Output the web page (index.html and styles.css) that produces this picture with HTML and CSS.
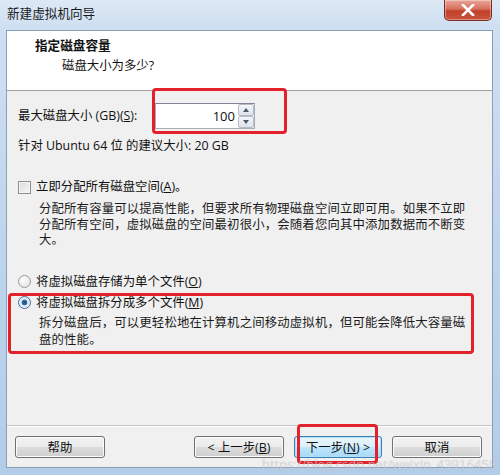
FILE: index.html
```html
<!DOCTYPE html>
<html lang="zh-CN">
<head>
    <meta charset="UTF-8">
    <title>新建虚拟机向导</title>
    <link rel="stylesheet" href="styles.css">
</head>
<body>
    <div class="window">
        <div class="titlebar">
            <span class="title">新建虚拟机向导</span>
            <span class="close">
                <svg width="14" height="12" viewBox="0 0 14 12">
                    <path d="M2 1 L12 11 M12 1 L2 11" stroke="#fff" stroke-width="2.6" stroke-linecap="square"/>
                </svg>
            </span>
        </div>

        <div class="client">
            <div class="header">
                <h1>指定磁盘容量</h1>
                <p>磁盘大小为多少?</p>
            </div>

            <div class="content">
                <div class="size-row">
                    <label for="size">最大磁盘大小 (GB)(<u>S</u>):</label>
                    <div class="spin">
                        <span class="spin-value" id="size">100</span>
                        <div class="spin-btns">
                            <span class="spin-btn up"></span>
                            <span class="spin-btn down"></span>
                        </div>
                    </div>
                </div>
                <p class="hint">针对 Ubuntu 64 位 的建议大小: 20 GB</p>

                <div class="option check-row"><span class="checkbox"></span>立即分配所有磁盘空间(<u>A</u>)。</div>
                <p class="desc">分配所有容量可以提高性能，但要求所有物理磁盘空间立即可用。如果不立即<br>分配所有空间，虚拟磁盘的空间最初很小，会随着您向其中添加数据而不断变<br>大。</p>

                <div class="option radio-row first"><span class="radio"></span>将虚拟磁盘存储为单个文件(<u>O</u>)</div>
                <div class="option radio-row"><span class="radio checked"></span>将虚拟磁盘拆分成多个文件(<u>M</u>)</div>
                <p class="desc split">拆分磁盘后，可以更轻松地在计算机之间移动虚拟机，但可能会降低大容量磁<br>盘的性能。</p>
            </div>

            <div class="footer">
                <button class="btn">帮助</button>
                <div class="nav">
                    <button class="btn">&lt; 上一步(<u>B</u>)</button>
                    <button class="btn default">下一步(<u>N</u>) &gt;</button>
                    <button class="btn">取消</button>
                </div>
            </div>
        </div>

        <!-- red annotation boxes -->
        <div class="mark mark-size"></div>
        <div class="mark mark-split"></div>
        <div class="mark mark-next"></div>
        <span class="watermark">https://blog.csdn.net/weixin_43916458</span>
    </div>
</body>
</html>
```

FILE: styles.css
```css
* {
    margin: 0;
    padding: 0;
    box-sizing: border-box;
}

:root {
    --frame: #c5d9ef;
    --frame-dark: #8a9fb8;
    --panel: #f0f0f0;
    --text: #111;
    --mark: #e3212b;
}

body {
    width: 500px;
    height: 475px;
    overflow: hidden;
    font-family: "Segoe UI", "Open Sans", "Noto Sans CJK SC", sans-serif;
    font-size: 12.4px;
    color: var(--text);
}

.window {
    position: relative;
    width: 500px;
    height: 475px;
    display: flex;
    flex-direction: column;
    padding: 0 7px 7px 6px;
    background: linear-gradient(180deg, #dde8f4 0, #cddff2 30px, #bcd3ec 60%, #b3cce8 100%);
}

.titlebar {
    height: 30px;
    display: flex;
    justify-content: space-between;
    align-items: flex-start;
}

.title {
    margin-top: 6px;
    margin-left: 1px;
    font-size: 12.6px;
    line-height: 16px;
    color: #1b1b1b;
}

.close {
    width: 48px;
    height: 21px;
    margin-right: 1px;
    display: flex;
    align-items: center;
    justify-content: center;
    border: 1px solid #7b2d22;
    border-top: none;
    border-radius: 0 0 5px 5px;
    background: linear-gradient(180deg, #e9a598 0, #d6705e 45%, #c2412b 55%, #c9533c 100%);
    box-shadow: inset 0 0 0 1px rgba(255, 255, 255, .35);
}

.client {
    flex: 1;
    display: flex;
    flex-direction: column;
    border: 1px solid var(--frame-dark);
    background: var(--panel);
}

.header {
    height: 60px;
    background: #fff;
    border-bottom: 1px solid #a0a0a0;
    padding: 7px 0 0 28px;
}

.header h1 {
    font-size: 12.6px;
    font-weight: bold;
    line-height: 16px;
}

.header p {
    margin-top: 4px;
    margin-left: 27px;
    line-height: 16px;
}

.content {
    flex: 1;
    padding: 12px 0 0 11px;
}

.size-row {
    display: flex;
    align-items: center;
    height: 26px;
}

.size-row label {
    width: 137px;
    line-height: 16px;
}

.spin {
    display: flex;
    height: 26px;
    border: 1px solid #abadb3;
    border-top-color: #7f8591;
    background: #fff;
}

.spin-value {
    width: 82px;
    padding-right: 3px;
    text-align: right;
    line-height: 24px;
    font-size: 13px;
}

.spin-btns {
    width: 16px;
    display: flex;
    flex-direction: column;
}

.spin-btn {
    flex: 1;
    display: flex;
    align-items: center;
    justify-content: center;
    border: 1px solid #b5bcc7;
    border-radius: 2px;
    background: linear-gradient(180deg, #f4f6f9, #dde3ea);
}

.spin-btn::after {
    content: "";
    border-left: 3px solid transparent;
    border-right: 3px solid transparent;
}

.spin-btn.up::after {
    border-bottom: 4px solid #4a5a6e;
}

.spin-btn.down::after {
    border-top: 4px solid #4a5a6e;
}

.hint {
    margin-top: 9px;
    line-height: 16px;
}

.option {
    display: flex;
    align-items: center;
    line-height: 16px;
}

.check-row {
    margin-top: 25px;
}

.checkbox {
    width: 13px;
    height: 13px;
    margin-right: 5px;
    border: 1px solid #8e8f8f;
    background: linear-gradient(135deg, #dcdcdc, #f6f6f6);
    box-shadow: inset 0 0 0 1px #f4f4f4;
}

.radio {
    width: 13px;
    height: 13px;
    margin-right: 5px;
    border-radius: 50%;
    border: 1px solid #9a9a9a;
    background: radial-gradient(circle at 40% 35%, #fff, #dcdcdc);
}

.radio.checked {
    border-color: #3f6e9a;
    background: radial-gradient(circle, #1d4f7e 0, #2e6ea5 2.5px, #dbe7f2 3.2px, #f5f8fb 100%);
}

.desc {
    margin: 6px 0 0 21px;
    font-size: 12.4px;
    letter-spacing: .15px;
    line-height: 15.5px;
    color: #1b1b1b;
}

.radio-row.first {
    margin-top: 26px;
}

.radio-row {
    margin-top: 5px;
}

.desc.split {
    margin-top: 3px;
    line-height: 17px;
}

.footer {
    height: 42px;
    border-top: 1px solid #c7c7c7;
    box-shadow: inset 0 1px 0 #fff;
    display: flex;
    align-items: flex-start;
    justify-content: space-between;
    padding: 10px 10px 0 8px;
}

.nav {
    display: flex;
    gap: 10px;
}

.btn {
    width: 90px;
    height: 22px;
    font-family: inherit;
    font-size: 12.4px;
    color: var(--text);
    border: 1px solid #707070;
    border-radius: 3px;
    background: linear-gradient(180deg, #f2f2f2 0, #ebebeb 50%, #dddddd 51%, #cfcfcf 100%);
    box-shadow: inset 0 0 0 1px #fcfcfc;
}

.btn.default {
    width: 88px;
    border-color: #3c7fb1;
    background: linear-gradient(180deg, #eaf6fd 0, #d9f0fc 50%, #bee6fd 51%, #a7d9f5 100%);
    box-shadow: inset 0 0 0 1px #aee0fb;
}

.mark {
    position: absolute;
    border: 3px solid var(--mark);
    border-radius: 4px;
}

.mark-size {
    left: 152px;
    top: 88px;
    width: 135px;
    height: 46px;
}

.mark-split {
    left: 8px;
    top: 293px;
    width: 466px;
    height: 61px;
}

.mark-next {
    left: 297px;
    top: 424px;
    width: 81px;
    height: 40px;
}

.watermark {
    position: absolute;
    left: 262px;
    top: 455px;
    font-size: 13px;
    color: rgba(225, 230, 238, .55);
    text-shadow: 0 0 1px rgba(120, 120, 120, .35);
    white-space: nowrap;
}
```
